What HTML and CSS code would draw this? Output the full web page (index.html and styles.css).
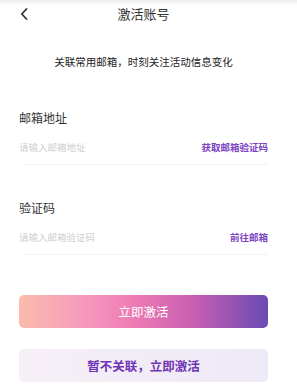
FILE: index.html
```html
<!DOCTYPE html>
<html lang="zh-CN">
<head>
  <meta charset="UTF-8">
  <title>激活账号</title>
  <link rel="stylesheet" href="styles.css">
</head>
<body>

<div class="page">
  <div class="top-bar">
    <span class="back">
      <svg width="8" height="12" viewBox="0 0 8 12"><path d="M6.5 1 L1.8 6 L6.5 11" fill="none" stroke="#333" stroke-width="1.8" stroke-linecap="round" stroke-linejoin="round"/></svg>
    </span>
    <span class="title">激活账号</span>
  </div>

  <p class="tip">关联常用邮箱，时刻关注活动信息变化</p>

  <div class="field">
    <div class="label">邮箱地址</div>
    <div class="input-row">
      <input type="text" placeholder="请输入邮箱地址">
      <span class="action">获取邮箱验证码</span>
    </div>
  </div>

  <div class="field">
    <div class="label">验证码</div>
    <div class="input-row">
      <input type="text" placeholder="请输入邮箱验证码">
      <span class="action">前往邮箱</span>
    </div>
  </div>

  <div class="btn btn-main">立即激活</div>
  <div class="btn btn-skip">暂不关联，立即激活</div>
</div>

</body>
</html>
```

FILE: styles.css
```css
* {
  box-sizing: border-box;
  font-family: "Noto Sans CJK SC", "Noto Sans", sans-serif;
}

html, body {
  margin: 0;
  padding: 0;
  background: #fff;
  color: #333;
}

body {
  background: linear-gradient(#ececec, #fff 6px) no-repeat;
}

.page {
  width: 287px;
  padding: 0 19px;
}

.top-bar {
  position: relative;
  height: 27px;
  display: flex;
  align-items: center;
  justify-content: center;
}

.top-bar .back {
  position: absolute;
  left: 1px;
  top: 8px;
  display: flex;
}

.top-bar .title {
  font-size: 13px;
  color: #333;
}

.tip {
  margin: 27px 0 0;
  text-align: center;
  font-size: 10.5px;
  line-height: 16px;
  color: #222;
}

.field {
  margin-top: 40px;
}

.field + .field {
  margin-top: 35px;
}

.label {
  font-size: 12px;
  line-height: 16px;
  color: #333;
}

.input-row {
  display: flex;
  align-items: center;
  height: 36px;
  margin-top: 3px;
  margin-left: 4px;
  border-bottom: 1px solid #f3f3f3;
}

.input-row input {
  flex: 1;
  min-width: 0;
  border: none;
  outline: none;
  padding: 0;
  margin-left: -4px;
  font-size: 9.5px;
  color: #333;
  background: transparent;
}

.input-row input::placeholder {
  color: #cfcfcf;
}

.action {
  font-size: 9.5px;
  font-weight: bold;
  color: #7d44c2;
}

.btn {
  height: 33px;
  border-radius: 5px;
  display: flex;
  align-items: center;
  justify-content: center;
  font-size: 12.5px;
}

.btn-main {
  margin-top: 40px;
  color: #fff;
  background: linear-gradient(90deg, #fbbcab 0%, #f69bbd 25%, #ef7cb4 45%, #c95fb2 70%, #6a4ab4 100%);
}

.btn-skip {
  margin-top: 21px;
  color: #6f33b5;
  font-weight: bold;
  background: linear-gradient(90deg, #f6eff7, #eee9f6);
}
```
